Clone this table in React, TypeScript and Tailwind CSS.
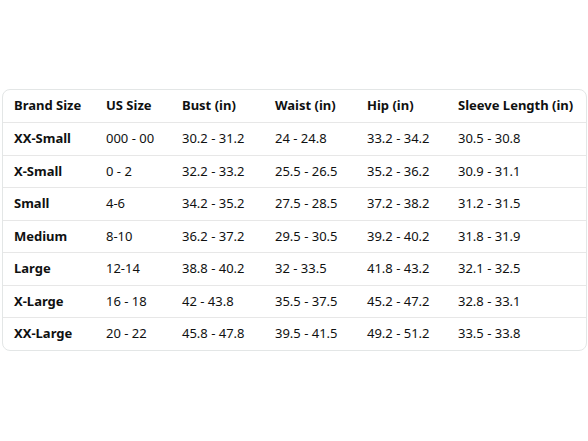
const headers = ["Brand Size", "US Size", "Bust (in)", "Waist (in)", "Hip (in)", "Sleeve Length (in)"];

const rows = [
  ["XX-Small", "000 - 00", "30.2 - 31.2", "24 - 24.8", "33.2 - 34.2", "30.5 - 30.8"],
  ["X-Small", "0 - 2", "32.2 - 33.2", "25.5 - 26.5", "35.2 - 36.2", "30.9 - 31.1"],
  ["Small", "4-6", "34.2 - 35.2", "27.5 - 28.5", "37.2 - 38.2", "31.2 - 31.5"],
  ["Medium", "8-10", "36.2 - 37.2", "29.5 - 30.5", "39.2 - 40.2", "31.8 - 31.9"],
  ["Large", "12-14", "38.8 - 40.2", "32 - 33.5", "41.8 - 43.2", "32.1 - 32.5"],
  ["X-Large", "16 - 18", "42 - 43.8", "35.5 - 37.5", "45.2 - 47.2", "32.8 - 33.1"],
  ["XX-Large", "20 - 22", "45.8 - 47.8", "39.5 - 41.5", "49.2 - 51.2", "33.5 - 33.8"],
];

const cols = "grid grid-cols-[92px_76px_93px_92px_91px_1fr]";

export default function App() {
  return (
    <div className="h-[441px] w-[588px] bg-white pt-[89px] pl-[2px] pr-[1px] font-['Noto_Sans',sans-serif] text-[13px] text-[#0f1111]">
      <div className="overflow-hidden rounded-lg border border-[#e3e6e6]">
        <div className={`${cols} h-[32px] items-center font-bold`}>
          {headers.map((h) => (
            <div key={h} className="pl-[11px] whitespace-nowrap">{h}</div>
          ))}
        </div>
        {rows.map((r) => (
          <div key={r[0]} className={`${cols} h-[32.5px] items-center border-t border-[#e7e7e7]`}>
            {r.map((c, i) => (
              <div key={i} className={`pl-[11px] whitespace-nowrap ${i === 0 ? "font-bold" : ""}`}>{c}</div>
            ))}
          </div>
        ))}
      </div>
    </div>
  );
}
